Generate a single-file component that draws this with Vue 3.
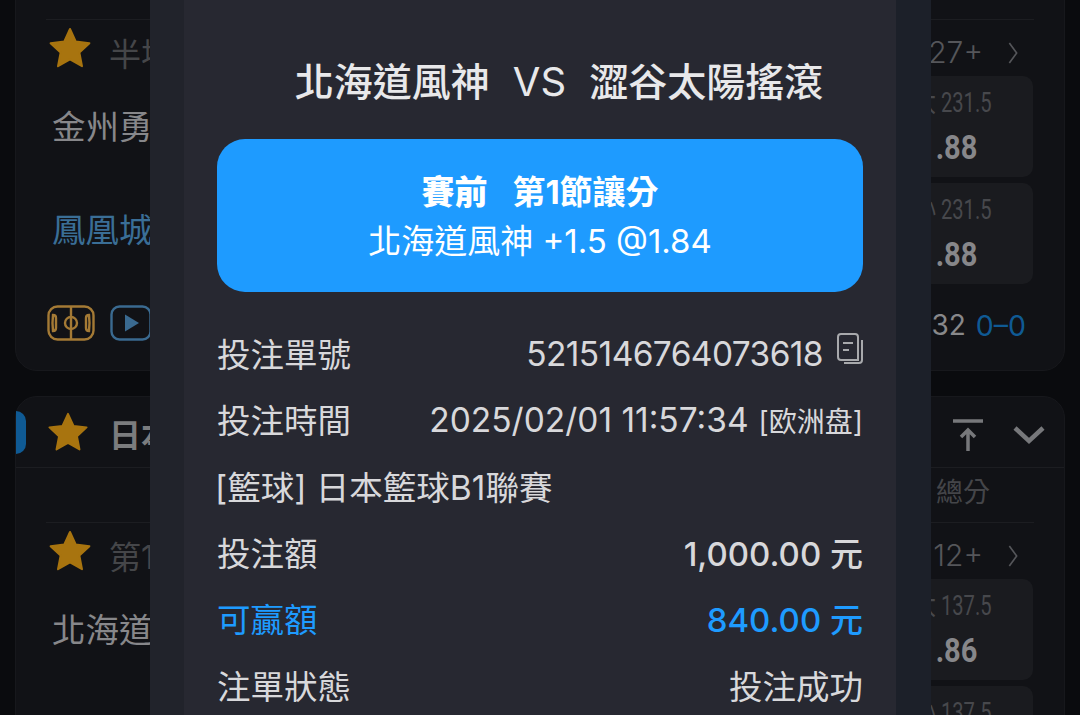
<template>
  <div class="page">
    <div class="board">
      <section class="card first-card">
        <div class="clipped-row"><span>1.875</span></div>
        <div class="market">
          <svg class="star" viewBox="0 0 24 24"><path d="M12 2.500l2.900 6.300 6.800.8-5 4.700 1.300 6.800-6-3.400-6 3.400 1.300-6.800-5-4.700 6.800-.8z" /></svg>
          <span class="market-name">半場讓分</span>
          <span class="more">27+</span>
          <svg class="more-arrow" viewBox="0 0 12 24"><path d="M2 1l8 11-8 11" /></svg>
        </div>
        <div class="match" v-for="m in firstMatch" :key="m.team">
          <span class="team" :class="{ home: m.home }">{{ m.team }}</span>
          <div class="odds">
            <span class="line">{{ m.line }}</span>
            <span class="price">{{ m.price }}</span>
          </div>
        </div>
        <div class="card-foot">
          <svg class="field" viewBox="0 0 48 36">
            <rect x="1.500" y="1.500" width="45" height="33" rx="9" />
            <path d="M24 1.500v33M6 10q3 0 3 3v10q0 3-3 3q-1-8 0-16zM42 10q-3 0-3 3v10q0 3 3 3q1-8 0-16z" />
            <circle cx="24" cy="18" r="6" />
          </svg>
          <svg class="play" viewBox="0 0 42 36">
            <rect x="1.500" y="1.500" width="39" height="33" rx="8" />
            <path d="M15 9.500l14 8.500-14 8.500z" />
          </svg>
          <span class="clock">32</span>
          <span class="score">0–0</span>
        </div>
      </section>

      <section class="card">
        <header class="league">
          <i class="league-tab"></i>
          <svg class="star star-league" viewBox="0 0 24 24"><path d="M12 2.500l2.900 6.300 6.800.8-5 4.700 1.300 6.800-6-3.400-6 3.400 1.300-6.800-5-4.700 6.800-.8z" /></svg>
          <span class="league-name">日本籃球B1聯賽</span>
          <svg class="to-top" viewBox="0 0 30 32"><path d="M0 2h30M15 32V12M8 18l7-7 7 7" /></svg>
          <svg class="collapse" viewBox="0 0 32 20"><path d="M2 3l14 13L30 3" /></svg>
        </header>
        <div class="columns"><span>總分</span></div>
        <div class="market">
          <svg class="star" viewBox="0 0 24 24"><path d="M12 2.500l2.900 6.300 6.800.8-5 4.700 1.300 6.800-6-3.400-6 3.400 1.300-6.800-5-4.700 6.800-.8z" /></svg>
          <span class="market-name">第1節讓分</span>
          <span class="more">12+</span>
          <svg class="more-arrow" viewBox="0 0 12 24"><path d="M2 1l8 11-8 11" /></svg>
        </div>
        <div class="match" v-for="m in secondMatch" :key="m.team">
          <span class="team">{{ m.team }}</span>
          <div class="odds">
            <span class="line">{{ m.line }}</span>
            <span class="price">{{ m.price }}</span>
          </div>
        </div>
      </section>
    </div>

    <div class="overlay">
      <div class="ticket-frame">
        <div class="ticket">
          <h2 class="ticket-title">北海道風神<em>VS</em>澀谷太陽搖滾</h2>
          <div class="pick">
            <strong><b>賽前</b>第1節讓分</strong>
            <span>北海道風神 +1.5 @1.84</span>
          </div>
          <div class="row">
            <span>投注單號</span>
            <span class="value digits order-no">5215146764073618
              <svg class="copy" viewBox="0 0 26 32">
                <path d="M21 27V4q0-3-3-3H4Q1 1 1 4v20q0 3 3 3z" />
                <path d="M6 10h10M6 17h6M25 7v20q0 3-3 3H7" />
              </svg>
            </span>
          </div>
          <div class="row">
            <span>投注時間</span>
            <span class="value digits">2025/02/01 11:57:34<small>[欧洲盘]</small></span>
          </div>
          <div class="row league-row"><span>[籃球] 日本籃球B1聯賽</span></div>
          <div class="row">
            <span>投注額</span>
            <span class="value amount">1,000.00 元</span>
          </div>
          <div class="row win">
            <span>可贏額</span>
            <span class="value amount">840.00 元</span>
          </div>
          <div class="row">
            <span>注單狀態</span>
            <span class="value">投注成功</span>
          </div>
        </div>
      </div>
    </div>
  </div>
</template>

<script setup>
const firstMatch = [
  { team: '金州勇士', line: '大 231.5', price: '1.88', home: false },
  { team: '鳳凰城太陽', line: '小 231.5', price: '1.88', home: true }
]

const secondMatch = [
  { team: '北海道風神', line: '大 137.5', price: '1.86' },
  { team: '澀谷太陽搖滾', line: '小 137.5', price: '1.86' }
]
</script>

<style>
html,
body {
  margin: 0;
  background: #0a0b0e;
}
</style>

<style scoped>
.page {
  position: relative;
  width: 1080px;
  height: 715px;
  overflow: hidden;
  background: #0a0b0e;
  font-family: Inter, "Noto Sans CJK TC", sans-serif;
}

.board {
  display: flex;
  flex-direction: column;
  gap: 25px;
  padding: 0 15px;
}

.card {
  box-sizing: border-box;
  border: 1px solid #17181c;
  border-radius: 22px;
  background: #111216;
  padding-bottom: 40px;
}

.first-card {
  margin-top: -60px;
  height: 431px;
}

.clipped-row {
  height: 78px;
  padding: 33px 77px 0 0;
  text-align: right;
  font-size: 24px;
  line-height: 28px;
  box-sizing: border-box;
  color: #4d4e52;
}

.market {
  display: flex;
  align-items: center;
  height: 57px;
  margin: 0 30px;
  border-top: 1px solid #1c1d21;
  box-sizing: border-box;
  color: #454649;
  font-size: 32px;
}

.star {
  width: 48px;
  height: 48px;
  fill: #a8740f;
  stroke: #a8740f;
  stroke-width: 1;
  stroke-linejoin: round;
  flex-shrink: 0;
}

.market-name {
  margin: 7px 0 0 15px;
}

.more {
  margin: 7px 0 0 auto;
  font-size: 30px;
  font-weight: 300;
  color: #55565a;
}

.more-arrow {
  width: 12px;
  height: 22px;
  margin: 10px 15px 0 24px;
  fill: none;
  stroke: #55565a;
  stroke-width: 1.800;
}

.match {
  display: flex;
  align-items: center;
  justify-content: space-between;
  height: 101px;
  margin: 0 31px 6px 36px;
}

.team {
  padding-bottom: 4px;
  color: #87878a;
  font-size: 33.500px;
}

.team.home {
  padding-bottom: 12px;
  color: #3a6e96;
}

.odds {
  box-sizing: border-box;
  display: flex;
  flex-direction: column;
  align-items: center;
  width: 164px;
  height: 101px;
  padding-top: 10px;
  border-radius: 10px;
  background: #1a1b1f;
}

.line {
  margin-left: 5px;
  color: #47484c;
  font-family: Roboto, "Noto Sans CJK TC", sans-serif;
  font-size: 28px;
  line-height: 34px;
  transform: scaleX(0.72);
}

.price {
  margin-right: 5px;
  color: #87878a;
  font-family: Roboto, sans-serif;
  font-weight: 700;
  font-size: 33px;
  line-height: 56px;
  transform: scaleX(0.88);
}

.card-foot {
  display: flex;
  align-items: center;
  height: 78px;
  margin: -6px 38px 0 31px;
}

.field {
  width: 48px;
  height: 36px;
  fill: none;
  stroke: #a47a35;
  stroke-width: 2.400;
}

.play {
  width: 42px;
  height: 36px;
  margin-left: 15px;
  fill: none;
  stroke: #3a6a90;
  stroke-width: 2.400;
}

.play path {
  fill: #3a6a90;
  stroke: none;
}

.clock {
  margin: 4px 0 0 auto;
  color: #88888a;
  font-size: 28px;
}

.score {
  margin: 4px 0 0 10px;
  color: #0f5a94;
  font-size: 28.500px;
}

.league {
  position: relative;
  display: flex;
  align-items: center;
  height: 71px;
  border-bottom: 1px solid #1c1d21;
  box-sizing: border-box;
}

.league-tab {
  position: absolute;
  left: 0;
  top: 14px;
  width: 10px;
  height: 43px;
  border-radius: 0 10px 10px 0;
  background: #0f5a94;
}

.star-league {
  width: 46px;
  height: 46px;
  margin-left: 29px;
}

.league-name {
  margin: 2px 0 0 18px;
  color: #7b7c7e;
  font-size: 32px;
  font-weight: 700;
}

.to-top {
  width: 30px;
  height: 32px;
  margin: 6px 0 0 auto;
  fill: none;
  stroke: #77787b;
  stroke-width: 3.500;
}

.collapse {
  width: 32px;
  height: 20px;
  margin: 6px 19px 0 30px;
  fill: none;
  stroke: #77787b;
  stroke-width: 4.500;
}

.columns {
  display: flex;
  align-items: center;
  justify-content: flex-end;
  height: 54px;
  padding: 0 74px 10px 0;
  box-sizing: border-box;
  color: #444549;
  font-size: 27px;
}

.overlay {
  position: absolute;
  inset: 0;
  display: flex;
  justify-content: center;
  padding-left: 1px;
}

.ticket-frame {
  box-sizing: border-box;
  width: 781px;
  height: 715px;
  padding: 0 35px 0 34px;
  background: linear-gradient(90deg, #21232b 50%, #1c2029 50%);
}

.ticket {
  box-sizing: border-box;
  height: 715px;
  padding: 0 33px;
  background: #272831;
  color: #e3e3e6;
  font-size: 33.500px;
}

.ticket-title {
  margin: 0;
  padding: 52px 0 0 38px;
  height: 139px;
  box-sizing: border-box;
  text-align: center;
  font-size: 39px;
  line-height: 60px;
  font-weight: 500;
  color: #e8e8ea;
}

.ticket-title em {
  margin: 0 23px;
  font-style: normal;
  font-weight: 400;
  font-size: 40px;
}

.pick {
  display: flex;
  flex-direction: column;
  align-items: center;
  justify-content: center;
  height: 153px;
  border-radius: 28px;
  background: #1e9bff;
  color: #fff;
}

.pick strong {
  font-size: 33px;
  font-weight: 700;
  line-height: 50px;
}

.pick strong b {
  margin-right: 25px;
}

.pick span {
  font-size: 33px;
  line-height: 48px;
}

.row {
  display: flex;
  align-items: center;
  justify-content: space-between;
  height: 66.300px;
  color: #d8d8db;
}

.row:nth-child(3) {
  margin-top: 27.500px;
}

.value {
  display: flex;
  align-items: center;
}

.digits {
  padding-top: 2px;
}

.order-no {
  letter-spacing: -0.6px;
}

.value small {
  margin-left: 10px;
  font-size: 28px;
  font-family: Inter, "Noto Sans CJK SC", sans-serif;
}

.copy {
  width: 26px;
  height: 32px;
  margin: -10px 0 0 14px;
  fill: none;
  stroke: #a8a9ac;
  stroke-width: 2;
}

.league-row {
  margin-left: -2px;
}

.amount {
  font-size: 33px;
  font-weight: 500;
}

.win {
  color: #1e9bff;
}
</style>
